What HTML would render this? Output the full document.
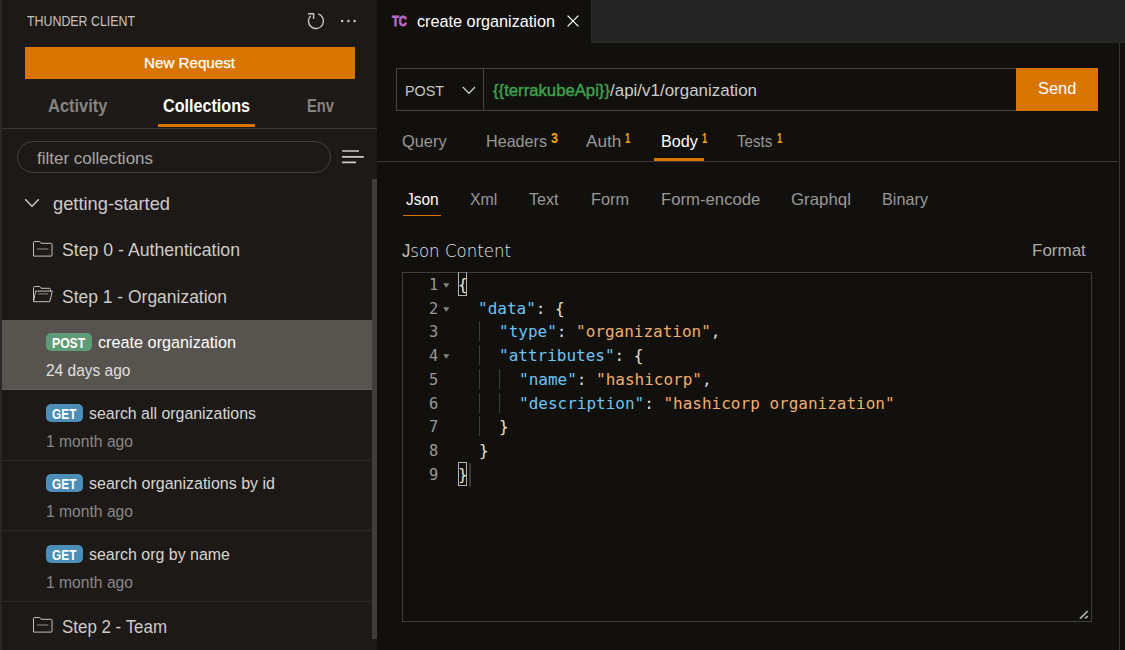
<!DOCTYPE html>
<html lang="en">
<head>
<meta charset="utf-8">
<title>Thunder Client - create organization</title>
<style>
html,body{margin:0;padding:0}
body{width:1125px;height:650px;overflow:hidden;position:relative;background:#11100c;font-family:"Liberation Sans",sans-serif}
#app{position:absolute;left:0;top:0;width:1125px;height:650px;overflow:hidden}
#app div,#app .g{position:absolute}
.g{left:0;top:0;width:0;height:0;margin:0;padding:0;display:block}
#app svg{position:absolute;overflow:visible}
.t{position:absolute;white-space:pre;line-height:0;transform-origin:0 50%;display:block}
</style>
</head>
<body>
<div id="app">
<aside class="g sidebar" aria-label="Thunder Client sidebar">
<div style="left:0px;top:0px;width:377px;height:650px;background:#1d1916;"></div>
<div style="left:0px;top:0px;width:2px;height:650px;background:#2b2725;"></div>
<div style="left:25px;top:47px;width:330px;height:32px;background:#d77500;"></div>
<div style="left:2px;top:128px;width:375px;height:1px;background:#3b3938;"></div>
<div style="left:158px;top:124px;width:97px;height:3px;background:#d77500;"></div>
<div style="left:17px;top:141px;width:314px;height:32px;background:transparent;box-sizing:border-box;border:1px solid #45423f;border-radius:16px"></div>
<div style="left:372px;top:179px;width:5px;height:460px;background:#403e3c;"></div>
<div style="left:2px;top:320px;width:370px;height:70px;background:#57534f;"></div>
<div style="left:2px;top:389px;width:370px;height:1px;background:#625e59;"></div>
<div style="left:2px;top:460px;width:370px;height:1px;background:#2c2928;"></div>
<div style="left:2px;top:530px;width:370px;height:1px;background:#2c2928;"></div>
<div style="left:2px;top:601px;width:370px;height:1px;background:#2c2928;"></div>
<div style="left:46px;top:333px;width:46px;height:18px;background:#5e9b76;border-radius:5px"></div>
<div style="left:46px;top:404px;width:37px;height:18px;background:#4b8fb8;border-radius:5px"></div>
<div style="left:46px;top:474px;width:37px;height:18px;background:#4b8fb8;border-radius:5px"></div>
<div style="left:46px;top:545px;width:37px;height:18px;background:#4b8fb8;border-radius:5px"></div>
<svg style="left:306px;top:12px" width="20" height="20" viewBox="0 0 20 20" fill="none" stroke="#c8c8c8" stroke-width="1.4"><path d="M12.3 1.9 A7.5 7.5 0 1 1 4.7 3.7"/><path d="M2 1.7 H7.6 V7"/></svg>
<svg style="left:338px;top:16px" width="20" height="10" viewBox="0 0 20 10" fill="#c8c8c8"><circle cx="4.1" cy="5" r="1.25"/><circle cx="10.4" cy="5" r="1.25"/><circle cx="16.6" cy="5" r="1.25"/></svg>
<svg style="left:342px;top:149px" width="24" height="16" viewBox="0 0 24 16" stroke="#cccccc" stroke-width="1.7"><path d="M0.1 2 H17 M0.1 7.8 H21.8 M0.1 13.4 H14"/></svg>
<svg style="left:24px;top:197px" width="16" height="12" viewBox="0 0 16 12" fill="none" stroke="#d0d0d0" stroke-width="1.3"><path d="M1.2 2.2 L8 9.2 L14.8 2.2"/></svg>
<svg style="left:32.7px;top:240.5px" width="20" height="17" viewBox="0 0 20 17" fill="none" stroke="#c2c2c2" stroke-width="1"><path d="M0.5 15.1 V1.5 Q0.5 0.5 1.5 0.5 H6.3 Q7.2 0.5 7.6 1.3 L8 2.3 H18 Q19 2.3 19 3.3 V14.1 Q19 15.1 18 15.1 Z"/><path d="M3.9 8 H15.3" stroke="#8c8c8c"/></svg>
<svg style="left:32.7px;top:286.4px" width="20" height="17" viewBox="0 0 20 17" fill="none" stroke="#c2c2c2" stroke-width="1"><path d="M0.5 15.7 V1.5 Q0.5 0.5 1.5 0.5 H6.3 Q7.2 0.5 7.6 1.3 L8 2.3 H16.4 Q17.4 2.3 17.4 3.3 V5.1"/><path d="M0.5 15.7 L2.7 5.1 H19.3 L16.8 15.7 Z"/><path d="M4.8 7.9 H15.3" stroke="#8c8c8c"/></svg>
<svg style="left:32.7px;top:617px" width="20" height="17" viewBox="0 0 20 17" fill="none" stroke="#c2c2c2" stroke-width="1"><path d="M0.5 15.1 V1.5 Q0.5 0.5 1.5 0.5 H6.3 Q7.2 0.5 7.6 1.3 L8 2.3 H18 Q19 2.3 19 3.3 V14.1 Q19 15.1 18 15.1 Z"/><path d="M3.9 8 H15.3" stroke="#8c8c8c"/></svg>
<span class="t" style="left:27px;top:21.00px;font:400 14.30px/0 'Liberation Sans', sans-serif;color:#c4c4c4;transform:scaleX(0.8659);">THUNDER CLIENT</span>
<span class="t" style="left:144px;top:63.00px;font:400 15.50px/0 'Liberation Sans', sans-serif;color:#ffffff;transform:scaleX(0.9780);-webkit-text-stroke:0.25px #fff">New Request</span>
<span class="t" style="left:48px;top:106.00px;font:700 18.09px/0 'Liberation Sans', sans-serif;color:#858382;transform:scaleX(0.9110);">Activity</span>
<span class="t" style="left:163px;top:106.00px;font:700 18.09px/0 'Liberation Sans', sans-serif;color:#ffffff;transform:scaleX(0.8929);">Collections</span>
<span class="t" style="left:306.5px;top:106.00px;font:700 18.09px/0 'Liberation Sans', sans-serif;color:#858382;transform:scaleX(0.8143);">Env</span>
<span class="t" style="left:37px;top:159.00px;font:400 16.89px/0 'Liberation Sans', sans-serif;color:#a9a7a6;transform:scaleX(1.0056);">filter collections</span>
<span class="t" style="left:53px;top:204.00px;font:400 18.09px/0 'Liberation Sans', sans-serif;color:#cdcbc9;transform:scaleX(1.0123);">getting-started</span>
<span class="t" style="left:62px;top:250.00px;font:400 18.09px/0 'Liberation Sans', sans-serif;color:#cdcbc9;transform:scaleX(0.9784);">Step 0 - Authentication</span>
<span class="t" style="left:62px;top:297.00px;font:400 18.09px/0 'Liberation Sans', sans-serif;color:#cdcbc9;transform:scaleX(0.9658);">Step 1 - Organization</span>
<span class="t" style="left:52.4px;top:343.00px;font:700 14.60px/0 'Liberation Sans', sans-serif;color:#ffffff;transform:scaleX(0.8355);">POST</span>
<span class="t" style="left:98px;top:343.00px;font:400 15.68px/0 'Liberation Sans', sans-serif;color:#ffffff;transform:scaleX(1.0353);">create organization</span>
<span class="t" style="left:46px;top:371.00px;font:400 15.68px/0 'Liberation Sans', sans-serif;color:#e0e0e0;transform:scaleX(0.9882);">24 days ago</span>
<span class="t" style="left:52px;top:414.00px;font:700 14.60px/0 'Liberation Sans', sans-serif;color:#ffffff;transform:scaleX(0.8133);">GET</span>
<span class="t" style="left:89px;top:414.00px;font:400 15.68px/0 'Liberation Sans', sans-serif;color:#d6d6d6;transform:scaleX(1.0142);">search all organizations</span>
<span class="t" style="left:46px;top:442.00px;font:400 15.68px/0 'Liberation Sans', sans-serif;color:#8a8887;transform:scaleX(0.9984);">1 month ago</span>
<span class="t" style="left:52px;top:484.00px;font:700 14.60px/0 'Liberation Sans', sans-serif;color:#ffffff;transform:scaleX(0.8133);">GET</span>
<span class="t" style="left:89px;top:484.00px;font:400 15.68px/0 'Liberation Sans', sans-serif;color:#d6d6d6;transform:scaleX(1.0215);">search organizations by id</span>
<span class="t" style="left:46px;top:512.00px;font:400 15.68px/0 'Liberation Sans', sans-serif;color:#8a8887;transform:scaleX(0.9984);">1 month ago</span>
<span class="t" style="left:52px;top:555.00px;font:700 14.60px/0 'Liberation Sans', sans-serif;color:#ffffff;transform:scaleX(0.8133);">GET</span>
<span class="t" style="left:89px;top:555.00px;font:400 15.68px/0 'Liberation Sans', sans-serif;color:#d6d6d6;transform:scaleX(1.0179);">search org by name</span>
<span class="t" style="left:46px;top:583.00px;font:400 15.68px/0 'Liberation Sans', sans-serif;color:#8a8887;transform:scaleX(0.9984);">1 month ago</span>
<span class="t" style="left:62px;top:627.00px;font:400 18.09px/0 'Liberation Sans', sans-serif;color:#cdcbc9;transform:scaleX(0.9357);">Step 2 - Team</span>
</aside>
<header class="g tabbar" aria-label="Editor tabs">
<div style="left:591px;top:0px;width:534px;height:43px;background:#252526;"></div>
<div style="left:591px;top:0px;width:1px;height:43px;background:#2a2a2d;"></div>
<div style="left:591px;top:42px;width:534px;height:1px;background:#2a2a2d;"></div>
<div style="left:1119px;top:43px;width:1px;height:607px;background:#383632;"></div>
<div style="left:1120px;top:43px;width:5px;height:607px;background:#11100c;"></div>
<svg style="left:567px;top:15px" width="12" height="12" viewBox="0 0 12 12" stroke="#ffffff" stroke-width="1.3"><path d="M0.6 0.6 L11.4 11.4 M11.4 0.6 L0.6 11.4"/></svg>
<span class="t" style="left:392px;top:21.00px;font:700 14.60px/0 'Liberation Sans', sans-serif;color:#b56ac8;transform:scaleX(0.7705);-webkit-text-stroke:0.8px #b56ac8">TC</span>
<span class="t" style="left:417px;top:22.00px;font:400 15.68px/0 'Liberation Sans', sans-serif;color:#ffffff;transform:scaleX(1.0353);">create organization</span>
</header>
<section class="g request" aria-label="Request">
<div style="left:396px;top:68px;width:88px;height:43px;background:transparent;box-sizing:border-box;border:1px solid #464442"></div>
<div style="left:483px;top:68px;width:533px;height:43px;background:transparent;box-sizing:border-box;border:1px solid #464442;border-right:0"></div>
<div style="left:1016px;top:68px;width:82px;height:43px;background:#d77500;"></div>
<svg style="left:461px;top:85px" width="16" height="10" viewBox="0 0 16 10" fill="none" stroke="#cccccc" stroke-width="1.3"><path d="M1.8 2 L7.9 8.2 L14 2"/></svg>
<span class="t" style="left:404.5px;top:91.00px;font:400 15.40px/0 'Liberation Sans', sans-serif;color:#c8c8c8;transform:scaleX(0.9306);">POST</span>
<span class="t" style="left:493px;top:91.00px;font:400 15.68px/0 'Liberation Sans', sans-serif;color:#3f9f4d;transform:scaleX(1.0656);-webkit-text-stroke:0.45px #3f9f4d">{{terrakubeApi}}</span>
<span class="t" style="left:610px;top:91.00px;font:400 15.68px/0 'Liberation Sans', sans-serif;color:#cccccc;transform:scaleX(1.0815);">/api/v1/organization</span>
<span class="t" style="left:1038px;top:88.00px;font:400 16.25px/0 'Liberation Sans', sans-serif;color:#ffffff;transform:scaleX(1.0118);">Send</span>
</section>
<nav class="g reqtabs" aria-label="Request sections">
<div style="left:377px;top:161px;width:740px;height:1px;background:#3b3938;"></div>
<div style="left:654px;top:158px;width:50px;height:3px;background:#d77500;"></div>
<div style="left:403px;top:215px;width:38px;height:1px;background:#d77500;"></div>
<span class="t" style="left:402.4px;top:142.00px;font:400 16.89px/0 'Liberation Sans', sans-serif;color:#9a9896;transform:scaleX(0.9706);">Query</span>
<span class="t" style="left:486px;top:142.00px;font:400 16.89px/0 'Liberation Sans', sans-serif;color:#9a9896;transform:scaleX(0.9562);">Headers</span>
<span class="t" style="left:551px;top:138.00px;font:700 14.00px/0 'Liberation Sans', sans-serif;color:#f0a30a;transform:scaleX(0.8978);">3</span>
<span class="t" style="left:586px;top:142.00px;font:400 16.89px/0 'Liberation Sans', sans-serif;color:#9a9896;transform:scaleX(1.0196);">Auth</span>
<span class="t" style="left:625.4px;top:138.00px;font:700 14.00px/0 'Liberation Sans', sans-serif;color:#f0a30a;transform:scaleX(0.6669);">1</span>
<span class="t" style="left:660.6px;top:142.00px;font:400 16.89px/0 'Liberation Sans', sans-serif;color:#ffffff;transform:scaleX(0.9566);">Body</span>
<span class="t" style="left:702.4px;top:138.00px;font:700 14.00px/0 'Liberation Sans', sans-serif;color:#f0a30a;transform:scaleX(0.6669);">1</span>
<span class="t" style="left:737.4px;top:142.00px;font:400 16.89px/0 'Liberation Sans', sans-serif;color:#9a9896;transform:scaleX(0.8936);">Tests</span>
<span class="t" style="left:776.6px;top:138.00px;font:700 14.00px/0 'Liberation Sans', sans-serif;color:#f0a30a;transform:scaleX(0.6669);">1</span>
<span class="t" style="left:406px;top:200.00px;font:400 16.89px/0 'Liberation Sans', sans-serif;color:#ffffff;transform:scaleX(0.9143);">Json</span>
<span class="t" style="left:470px;top:200.00px;font:400 16.89px/0 'Liberation Sans', sans-serif;color:#9a9896;transform:scaleX(0.9428);">Xml</span>
<span class="t" style="left:529.4px;top:200.00px;font:400 16.89px/0 'Liberation Sans', sans-serif;color:#9a9896;transform:scaleX(0.9563);">Text</span>
<span class="t" style="left:590.6px;top:200.00px;font:400 16.89px/0 'Liberation Sans', sans-serif;color:#9a9896;transform:scaleX(0.9651);">Form</span>
<span class="t" style="left:660.6px;top:200.00px;font:400 16.89px/0 'Liberation Sans', sans-serif;color:#9a9896;transform:scaleX(0.9904);">Form-encode</span>
<span class="t" style="left:791px;top:200.00px;font:400 16.89px/0 'Liberation Sans', sans-serif;color:#9a9896;transform:scaleX(0.9992);">Graphql</span>
<span class="t" style="left:882px;top:200.00px;font:400 16.89px/0 'Liberation Sans', sans-serif;color:#9a9896;transform:scaleX(0.9615);">Binary</span>
</nav>
<section class="g editor" aria-label="Json Content editor">
<div style="left:402px;top:272px;width:690px;height:350px;background:transparent;box-sizing:border-box;border:1px solid #3f3d3b"></div>
<svg style="left:443px;top:282.8px" width="7" height="5" viewBox="0 0 7 5" fill="#858381"><path d="M0.2 0.3 H6.4 L3.3 4.7 Z"/></svg>
<svg style="left:443px;top:306.5px" width="7" height="5" viewBox="0 0 7 5" fill="#858381"><path d="M0.2 0.3 H6.4 L3.3 4.7 Z"/></svg>
<svg style="left:443px;top:354.0px" width="7" height="5" viewBox="0 0 7 5" fill="#858381"><path d="M0.2 0.3 H6.4 L3.3 4.7 Z"/></svg>
<div style="left:479px;top:321px;width:1px;height:20px;background:#393e41;"></div>
<div style="left:479px;top:345px;width:1px;height:20px;background:#393e41;"></div>
<div style="left:479px;top:369px;width:1px;height:20px;background:#393e41;"></div>
<div style="left:479px;top:393px;width:1px;height:20px;background:#393e41;"></div>
<div style="left:479px;top:416px;width:1px;height:20px;background:#393e41;"></div>
<div style="left:499px;top:369px;width:1px;height:20px;background:#393e41;"></div>
<div style="left:499px;top:393px;width:1px;height:20px;background:#393e41;"></div>
<div style="left:458px;top:272px;width:9px;height:24px;background:transparent;box-sizing:border-box;border:1px solid #b4b4b4;border-top-color:#6a6866"></div>
<div style="left:458px;top:462px;width:9px;height:24px;background:transparent;box-sizing:border-box;border:1px solid #b4b4b4"></div>
<div style="left:469px;top:463px;width:2px;height:24px;background:#3a3836;"></div>
<svg style="left:1078px;top:608px" width="12" height="12" viewBox="0 0 12 12" stroke="#b0b0b0" stroke-width="1.7"><path d="M2 10.7 L9.8 3 M7.2 10.4 L9.8 8"/></svg>
<span class="t" style="left:402px;top:251.00px;font:200 18.20px/0 'DejaVu Sans', 'Liberation Sans', sans-serif;color:#e4e4e4;transform:scaleX(0.9133);"><span style="font-family:'Liberation Sans',sans-serif;font-weight:400;color:#bdbdbd">J</span>son Content</span>
<span class="t" style="left:1031.8px;top:250.00px;font:400 16.25px/0 'Liberation Sans', sans-serif;color:#adaba8;transform:scaleX(1.0453);">Format</span>
<span class="t" style="left:429.0px;top:285.00px;font:400 16.00px/0 'DejaVu Sans Mono', 'Liberation Mono', monospace;color:#9a9896;transform:scaleX(0.9589);">1</span>
<span class="t" style="left:458.0px;top:285.00px;font:400 16.00px/0 'DejaVu Sans Mono', 'Liberation Mono', monospace;color:#dcdcdc;transform:scaleX(0.9989);"><span style="color:#e6e0cc">{</span></span>
<span class="t" style="left:429.0px;top:309.00px;font:400 16.00px/0 'DejaVu Sans Mono', 'Liberation Mono', monospace;color:#9a9896;transform:scaleX(0.9589);">2</span>
<span class="t" style="left:478.2px;top:309.00px;font:400 16.00px/0 'DejaVu Sans Mono', 'Liberation Mono', monospace;color:#dcdcdc;transform:scaleX(0.9996);"><span style="color:#6cc4f5">"data"</span><span style="color:#dcdcdc">: </span><span style="color:#e6e0cc">{</span></span>
<span class="t" style="left:429.0px;top:332.00px;font:400 16.00px/0 'DejaVu Sans Mono', 'Liberation Mono', monospace;color:#9a9896;transform:scaleX(0.9589);">3</span>
<span class="t" style="left:498.9px;top:332.00px;font:400 16.00px/0 'DejaVu Sans Mono', 'Liberation Mono', monospace;color:#dcdcdc;transform:scaleX(0.9997);"><span style="color:#6cc4f5">"type"</span><span style="color:#dcdcdc">: </span><span style="color:#f0ae6c">"organization"</span><span style="color:#dcdcdc">,</span></span>
<span class="t" style="left:429.0px;top:356.00px;font:400 16.00px/0 'DejaVu Sans Mono', 'Liberation Mono', monospace;color:#9a9896;transform:scaleX(0.9589);">4</span>
<span class="t" style="left:498.9px;top:356.00px;font:400 16.00px/0 'DejaVu Sans Mono', 'Liberation Mono', monospace;color:#dcdcdc;transform:scaleX(0.9997);"><span style="color:#6cc4f5">"attributes"</span><span style="color:#dcdcdc">: </span><span style="color:#e6e0cc">{</span></span>
<span class="t" style="left:429.0px;top:380.00px;font:400 16.00px/0 'DejaVu Sans Mono', 'Liberation Mono', monospace;color:#9a9896;transform:scaleX(0.9589);">5</span>
<span class="t" style="left:519.1px;top:380.00px;font:400 16.00px/0 'DejaVu Sans Mono', 'Liberation Mono', monospace;color:#dcdcdc;transform:scaleX(0.9996);"><span style="color:#6cc4f5">"name"</span><span style="color:#dcdcdc">: </span><span style="color:#f0ae6c">"hashicorp"</span><span style="color:#dcdcdc">,</span></span>
<span class="t" style="left:429.0px;top:404.00px;font:400 16.00px/0 'DejaVu Sans Mono', 'Liberation Mono', monospace;color:#9a9896;transform:scaleX(0.9589);">6</span>
<span class="t" style="left:519.1px;top:404.00px;font:400 16.00px/0 'DejaVu Sans Mono', 'Liberation Mono', monospace;color:#dcdcdc;transform:scaleX(0.9997);"><span style="color:#6cc4f5">"description"</span><span style="color:#dcdcdc">: </span><span style="color:#f0ae6c">"hashicorp organization"</span></span>
<span class="t" style="left:429.0px;top:427.00px;font:400 16.00px/0 'DejaVu Sans Mono', 'Liberation Mono', monospace;color:#9a9896;transform:scaleX(0.9589);">7</span>
<span class="t" style="left:498.7px;top:427.00px;font:400 16.00px/0 'DejaVu Sans Mono', 'Liberation Mono', monospace;color:#dcdcdc;transform:scaleX(0.9989);"><span style="color:#e6e0cc">}</span></span>
<span class="t" style="left:429.0px;top:451.00px;font:400 16.00px/0 'DejaVu Sans Mono', 'Liberation Mono', monospace;color:#9a9896;transform:scaleX(0.9589);">8</span>
<span class="t" style="left:478.5px;top:451.00px;font:400 16.00px/0 'DejaVu Sans Mono', 'Liberation Mono', monospace;color:#dcdcdc;transform:scaleX(0.9989);"><span style="color:#e6e0cc">}</span></span>
<span class="t" style="left:429.0px;top:475.00px;font:400 16.00px/0 'DejaVu Sans Mono', 'Liberation Mono', monospace;color:#9a9896;transform:scaleX(0.9589);">9</span>
<span class="t" style="left:458.0px;top:475.00px;font:400 16.00px/0 'DejaVu Sans Mono', 'Liberation Mono', monospace;color:#dcdcdc;transform:scaleX(0.9989);"><span style="color:#e6e0cc">}</span></span>
</section>
</div>
</body>
</html>
